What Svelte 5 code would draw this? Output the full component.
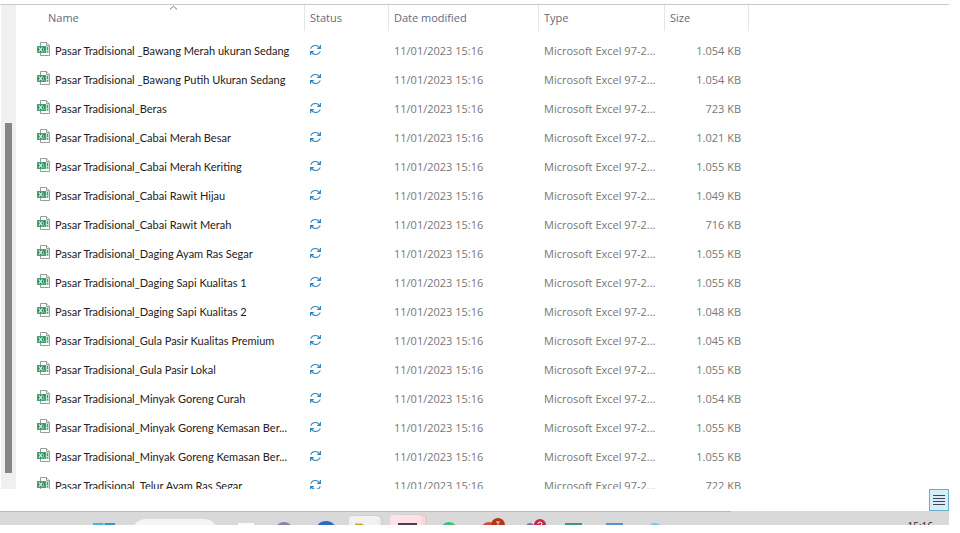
<script lang="ts">
  interface FileRow {
    name: string;
    size: string;
  }

  const files: FileRow[] = [
    { name: 'Pasar Tradisional _Bawang Merah ukuran Sedang', size: '1.054 KB' },
    { name: 'Pasar Tradisional _Bawang Putih Ukuran Sedang', size: '1.054 KB' },
    { name: 'Pasar Tradisional_Beras', size: '723 KB' },
    { name: 'Pasar Tradisional_Cabai Merah Besar', size: '1.021 KB' },
    { name: 'Pasar Tradisional_Cabai Merah Keriting', size: '1.055 KB' },
    { name: 'Pasar Tradisional_Cabai Rawit Hijau', size: '1.049 KB' },
    { name: 'Pasar Tradisional_Cabai Rawit Merah', size: '716 KB' },
    { name: 'Pasar Tradisional_Daging Ayam Ras Segar', size: '1.055 KB' },
    { name: 'Pasar Tradisional_Daging Sapi Kualitas 1', size: '1.055 KB' },
    { name: 'Pasar Tradisional_Daging Sapi Kualitas 2', size: '1.048 KB' },
    { name: 'Pasar Tradisional_Gula Pasir Kualitas Premium', size: '1.045 KB' },
    { name: 'Pasar Tradisional_Gula Pasir Lokal', size: '1.055 KB' },
    { name: 'Pasar Tradisional_Minyak Goreng Curah', size: '1.054 KB' },
    { name: 'Pasar Tradisional_Minyak Goreng Kemasan Ber...', size: '1.055 KB' },
    { name: 'Pasar Tradisional_Minyak Goreng Kemasan Ber...', size: '1.055 KB' },
    { name: 'Pasar Tradisional_Telur Ayam Ras Segar', size: '722 KB' },
  ];
  const modified = '11/01/2023 15:16';
  const fileType = 'Microsoft Excel 97-2...';
</script>

<div class="desktop">
  <main class="explorer">
    <div class="scrollbar"><div class="thumb"></div></div>
    <div class="list">
      <table>
        <colgroup>
          <col class="col-name" />
          <col class="col-status" />
          <col class="col-date" />
          <col class="col-type" />
          <col class="col-size" />
        </colgroup>
        <thead>
          <tr>
            <th class="name" aria-sort="ascending">
              <button type="button">Name</button>
              <svg class="caret" width="9" height="6" viewBox="0 0 9 6" aria-hidden="true">
                <path d="M1 4.5 4.5 1.2 8 4.5" fill="none" stroke="#777" />
              </svg>
            </th>
            <th><button type="button">Status</button></th>
            <th><button type="button">Date modified</button></th>
            <th><button type="button">Type</button></th>
            <th><button type="button">Size</button></th>
          </tr>
        </thead>
        <tbody>
          {#each files as file}
            <tr>
              <td class="name">
                <div class="file">
                  <svg width="14" height="15" viewBox="0 0 14 15" aria-hidden="true">
                    <path d="M3.5.5h6l3 3v10h-9z" fill="#fff" stroke="#9a9a9a" />
                    <path d="M9.5.5v3h3" fill="#eee" stroke="#9a9a9a" />
                    <path d="M8 4h4v7H8z" fill="#c4e2d1" />
                    <path d="M10.5 5v3M10.5 9v1.5" stroke="#4f8d6b" />
                    <path d="M0 4h9v7H0z" fill="#46a277" />
                    <path d="M1 5h7v5H1z" fill="#2d8a5d" />
                    <path d="m1.8 5.3 3.6 4.4m0-4.4L1.8 9.7" stroke="#e2f4ea" stroke-width="1.1" />
                    <path d="M6.6 6v3.3h1.2" fill="none" stroke="#a5d5bb" stroke-width=".8" />
                  </svg>
                  <span>{file.name}</span>
                </div>
              </td>
              <td>
                <svg class="sync" width="12" height="12" viewBox="0 0 12 12" role="img" aria-label="Sync pending">
                  <g fill="none" stroke="#2b84c0" stroke-width="1.1">
                    <path d="M.8 4.6C1.5 2.7 3.3 1.5 5.4 1.5c2 0 3.6 1 4.5 2.7M10.4 1v3.4H7.2" />
                    <path d="M10.2 7.4c-.7 1.9-2.5 3.1-4.6 3.1-2 0-3.6-1-4.5-2.7M.6 11V7.6h3.2" />
                  </g>
                </svg>
              </td>
              <td>{modified}</td>
              <td>{fileType}</td>
              <td class="size">{file.size}</td>
            </tr>
          {/each}
        </tbody>
      </table>
    </div>
  </main>

  <div class="status-bar">
    <button type="button" class="view" aria-label="Details view">
      <svg width="12" height="12" viewBox="0 0 12 12" aria-hidden="true">
        <path d="M0 1.5h12M0 4.5h12M0 7.5h12M0 10.5h12" stroke="#454550" />
      </svg>
    </button>
  </div>

  <footer class="taskbar">
    <svg class="start" width="22" height="14" viewBox="0 0 22 14" aria-hidden="true">
      <path d="M0 12h10.5v10H0z" fill="#45b5dc" />
      <path d="M11.5 12H22v10H11.5z" fill="#3c94c4" />
    </svg>
    <div class="search"></div>
    <div class="apps">
      <svg viewBox="0 0 41 14" aria-hidden="true"><path d="M12 12h16v8H12z" fill="#fafafa" /></svg>
      <svg viewBox="0 0 41 14" aria-hidden="true"><circle cx="17" cy="21" r="10" fill="#8b80b0" /></svg>
      <svg viewBox="0 0 41 14" aria-hidden="true"><circle cx="18" cy="21" r="11" fill="#2e68cf" /></svg>
      <svg viewBox="0 0 41 14" aria-hidden="true">
        <rect x="3" y="5" width="30" height="20" rx="3" fill="#e8e8e8" stroke="#c8c8c8" />
        <rect x="0" y="5" width="30" height="20" rx="3" fill="#f1f1f1" />
        <path d="M6 12.5h7l2 1.5H6z" fill="#cfa92f" />
      </svg>
      <svg viewBox="0 0 41 14" aria-hidden="true">
        <rect x="5" y="4" width="31" height="20" rx="3" fill="#f5d9dd" stroke="#d8c4c7" />
        <rect x="0" y="4" width="31" height="20" rx="3" fill="#fde3e7" />
        <path d="M8 12h19v3H8z" fill="#49404f" />
      </svg>
      <svg viewBox="0 0 41 14" aria-hidden="true"><circle cx="18" cy="20" r="9" fill="#45bd78" /></svg>
      <svg viewBox="0 0 41 14" aria-hidden="true">
        <circle cx="17" cy="20" r="9" fill="#d34a3c" />
        <circle cx="26" cy="14" r="7" fill="#b43616" />
        <path d="M24 11h4M26 11v4" stroke="#f0d6cc" />
      </svg>
      <svg viewBox="0 0 41 14" aria-hidden="true">
        <circle cx="17" cy="16" r="4" fill="#7773b8" />
        <circle cx="27" cy="14" r="6" fill="#c22a48" />
        <path d="M25 13q0-2 2-2t2 2l-2 2" fill="none" stroke="#fff" />
      </svg>
      <svg viewBox="0 0 41 14" aria-hidden="true"><path d="M11 12h17v4H11z" fill="#3a9a6c" /></svg>
      <svg viewBox="0 0 41 14" aria-hidden="true"><path d="M11 12h17v4H11z" fill="#5593c8" /></svg>
      <svg viewBox="0 0 41 14" aria-hidden="true"><circle cx="19" cy="20" r="8" fill="#68cde0" /></svg>
    </div>
    <time class="clock">15:16</time>
  </footer>
</div>

<style>
  :global(body) {
    background: #fff;
  }
  .desktop {
    display: flex;
    flex-direction: column;
    box-sizing: border-box;
    height: 100vh;
    padding: 4px 11px 8px 0;
    overflow: hidden;
    font-family: 'Segoe UI', 'Open Sans', sans-serif;
    font-size: 11px;
    color: #777;
  }
  .explorer {
    display: flex;
    flex: 1;
    gap: 2px;
    min-height: 0;
    border-top: 1px solid #c9c9c9;
    overflow: hidden;
  }
  .scrollbar {
    flex: none;
    display: flex;
    justify-content: center;
    box-sizing: border-box;
    width: 15px;
    margin-left: 1px;
    padding: 118px 0 16px;
    background: #f0f0f0;
  }
  .thumb {
    width: 7px;
    background: #868686;
  }
  .list {
    flex: 1;
    overflow: hidden;
  }
  table {
    width: 731px;
    border-collapse: separate;
    border-spacing: 0;
    table-layout: fixed;
  }
  .col-name {
    width: 287px;
  }
  .col-status {
    width: 84px;
  }
  .col-date {
    width: 150px;
  }
  .col-type {
    width: 126px;
  }
  .col-size {
    width: 84px;
  }
  th {
    position: relative;
    height: 26px;
    padding: 0;
    border-right: 1px solid #e6e6e6;
    text-align: left;
  }
  th button {
    padding: 0 5px 2px;
    border: 0;
    background: none;
    font: inherit;
    font-weight: 400;
    color: #5f6b80;
  }
  th.name button {
    padding-left: 30px;
  }
  .caret {
    position: absolute;
    top: 0;
    right: 126px;
  }
  tbody::before {
    content: '';
    display: block;
    height: 5px;
  }
  td {
    height: 29px;
    padding: 0 8px 0 5px;
    white-space: nowrap;
  }
  td.name {
    padding: 0 0 0 19px;
    font-family: 'Segoe UI', Lato, sans-serif;
    color: #222;
  }
  .file {
    display: flex;
    align-items: center;
    gap: 4px;
  }
  .file svg,
  .sync {
    display: block;
    flex: none;
    margin-bottom: 2px;
  }
  .size {
    text-align: right;
  }
  .status-bar {
    display: flex;
    flex: none;
    justify-content: flex-end;
    height: 22px;
  }
  .view {
    display: flex;
    align-items: center;
    justify-content: center;
    box-sizing: border-box;
    width: 20px;
    height: 22px;
    padding: 0;
    border: 1px solid #69adc8;
    background: #d5eef8;
  }
  .taskbar {
    display: flex;
    flex: none;
    height: 14px;
    padding: 0 16px 0 93px;
    background: linear-gradient(#b9b9b9, #b9b9b9) 0 0 / 77% 1px no-repeat #d9d9d9;
    overflow: hidden;
  }
  .start,
  .search {
    flex: none;
  }
  .search {
    width: 86px;
    height: 28px;
    margin: 8px 8px 0 17px;
    border-radius: 14px;
    background: #f5f5f5;
  }
  .apps {
    display: flex;
  }
  .apps svg {
    flex: none;
    width: 41px;
    height: 14px;
  }
  .clock {
    margin-left: auto;
    padding-top: 8px;
    font-size: 10px;
    line-height: 14px;
    color: #222;
  }
</style>
